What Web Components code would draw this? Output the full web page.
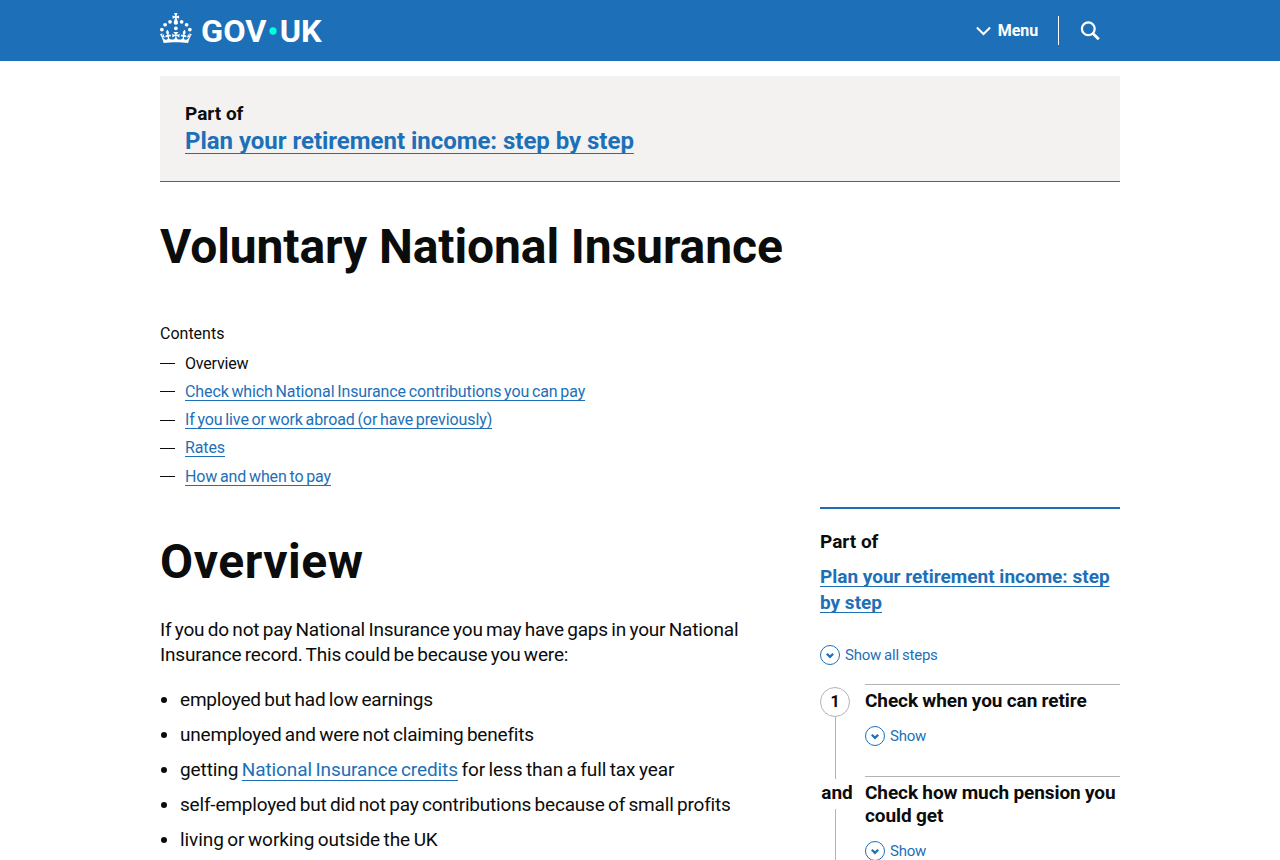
<!DOCTYPE html>
<html lang="en">
<head>
<meta charset="utf-8">
<title>Voluntary National Insurance: Overview - GOV.UK</title>
<style>
    html {
        --blue: #1d70b8;
        --grey: #b1b4b6;
        --light: #f3f2f1;
        overflow: hidden;
    }

    body {
        margin: 0;
        height: 860px;
        overflow: hidden;
        background: #fff;
        color: #0b0c0c;
        font: 19px/25px Roboto, "Liberation Sans", sans-serif;
    }
</style>
</head>
<body>

<govuk-header></govuk-header>
<govuk-page>
    <step-banner slot="banner" label="Part of">
        <govuk-link style="letter-spacing: -0.03px">Plan your retirement income: step by step</govuk-link>
    </step-banner>
    <page-heading slot="title" style="letter-spacing: -0.1px">Voluntary National Insurance</page-heading>
    <contents-list slot="contents">
        <contents-item style="letter-spacing: -0.2px">Overview</contents-item>
        <contents-item><govuk-link>Check which National Insurance contributions you can pay</govuk-link></contents-item>
        <contents-item><govuk-link>If you live or work abroad (or have previously)</govuk-link></contents-item>
        <contents-item><govuk-link>Rates</govuk-link></contents-item>
        <contents-item><govuk-link>How and when to pay</govuk-link></contents-item>
    </contents-list>
    <page-heading style="letter-spacing: 0.55px">Overview</page-heading>
    <body-text>If you do not pay National Insurance you may have gaps in your National Insurance record. This could be because you were:</body-text>
    <bullet-list>
        <bullet-item>employed but had low earnings</bullet-item>
        <bullet-item>unemployed and were not claiming benefits</bullet-item>
        <bullet-item style="letter-spacing: -0.1px">getting <govuk-link>National Insurance credits</govuk-link> for less than a full tax year</bullet-item>
        <bullet-item>self-employed but did not pay contributions because of small profits</bullet-item>
        <bullet-item style="letter-spacing: -0.08px">living or working outside the UK</bullet-item>
    </bullet-list>
    <step-nav slot="aside" label="Part of">
        <govuk-link slot="link">Plan your retirement income: step by step</govuk-link>
        <step-item marker="1">Check when you can retire</step-item>
        <step-item marker="and">Check how much pension you could get</step-item>
    </step-nav>
</govuk-page>

<script>
const define = (name, html, setup) => {
    const template = document.createElement ("template");
    template.innerHTML = html;

    customElements.define (name, class extends HTMLElement {
        constructor () {
            super ();
            this.attachShadow ({mode: "open"});
        }

        connectedCallback () {
            if (this.shadowRoot.childNodes.length) return;
            this.shadowRoot.appendChild (template.content.cloneNode (true));
            if (setup) setup (this, this.shadowRoot);
        }
    });
};

const setLabel = (host, root) => {
    root.querySelector (".label").textContent = host.getAttribute ("label");
};

define ("govuk-header", `
<style>
    :host {
        display: block;
        height: 61px;
        background: var(--blue);
        color: #fff;
    }

    .inner {
        display: flex;
        justify-content: space-between;
        width: 960px;
        margin: 0 auto;
    }

    .logo {
        display: block;
        margin-top: 13px;
        fill: #fff;
        font-size: 62px;
        font-weight: 700;
    }

    nav {
        display: flex;
        align-items: center;
        height: 61px;
        font-size: 16px;
        font-weight: 700;
    }

    .menu {
        display: flex;
        align-items: center;
        gap: 7px;
        height: 29px;
        padding-right: 20px;
        border-right: 1px solid #fff;
        letter-spacing: -0.1px;
    }

    .search {
        margin: 0 20px 0 21px;
    }

    nav svg {
        display: block;
        fill: none;
        stroke: #fff;
    }
</style>
<div class="inner">
    <svg class="logo" width="162" height="30" viewBox="0 0 324 60" overflow="visible">
        <circle cx="20" cy="17.6" r="3.7"/>
        <circle cx="10.2" cy="23.5" r="3.7"/>
        <circle cx="3.7" cy="33.2" r="3.7"/>
        <circle cx="31.7" cy="30.6" r="3.7"/>
        <circle cx="43.3" cy="17.6" r="3.7"/>
        <circle cx="53.2" cy="23.5" r="3.7"/>
        <circle cx="59.7" cy="33.2" r="3.7"/>
        <path d="M33.1,9.8c.2-.1.3-.3.5-.5l4.6,2.4v-6.8l-4.6,1.5c-.1-.2-.3-.3-.5-.5l1.9-5.9h-6.7l1.9,5.9c-.2.1-.3.3-.5.5l-4.6-1.5v6.8l4.6-2.4c.1.2.3.3.5.5l-2.6,8c-.9,2.8,1.2,5.7,4.1,5.7h0c3,0,5.1-2.9,4.1-5.7l-2.6-8ZM37,37.9s-3.4,3.8-4.1,6.1c2.2,0,4.2-.5,6.4-2.8l-.7,8.5c-2-2.8-4.4-4.1-5.7-3.8.1,3.1.5,6.7,5.8,7.2,3.7.3,6.7-1.5,7-3.8.4-2.6-2-4.3-3.7-1.6-1.4-4.5,2.4-6.1,4.9-3.2-1.9-4.5-1.8-7.7,2.4-10.9,3,4,2.6,7.3-1.2,11.1,2.4-1.3,6.2,0,4,4.6-1.2-2.8-3.7-2.2-4.2.2-.3,1.7.7,3.7,3,4.2,1.9.3,4.7-.9,7-5.9-1.3,0-2.4.7-3.9,1.7l2.4-8c.6,2.3,1.4,3.7,2.2,4.5.6-1.6.5-2.8,0-5.3l5,1.8c-2.6,3.6-5.2,8.7-7.3,17.5-7.4-1.1-15.7-1.7-24.5-1.7h0c-8.8,0-17.1.6-24.5,1.7-2.1-8.9-4.7-13.9-7.3-17.5l5-1.8c-.5,2.5-.6,3.7,0,5.3.8-.8,1.6-2.3,2.2-4.5l2.4,8c-1.5-1-2.6-1.7-3.9-1.7,2.3,5,5.2,6.2,7,5.9,2.3-.4,3.3-2.4,3-4.2-.5-2.4-3-3.1-4.2-.2-2.2-4.6,1.6-6,4-4.6-3.7-3.7-4.2-7.1-1.2-11.1,4.2,3.2,4.3,6.4,2.4,10.9,2.5-2.8,6.3-1.3,4.9,3.2-1.8-2.7-4.1-1-3.7,1.6.3,2.3,3.3,4.1,7,3.8,5.4-.5,5.7-4.2,5.8-7.2-1.3-.2-3.7,1-5.7,3.8l-.7-8.5c2.2,2.3,4.2,2.7,6.4,2.8-.7-2.3-4.1-6.1-4.1-6.1h10.6Z"/>
        <text x="82" y="58" textLength="131" lengthAdjust="spacingAndGlyphs">GOV</text>
        <circle cx="226" cy="36" r="7.3" fill="#00ffe0"/>
        <text x="239.500" y="58" textLength="84" lengthAdjust="spacingAndGlyphs">UK</text>
    </svg>
    <nav>
        <div class="menu">
            <svg width="15" height="10" viewBox="0 0 15 10" stroke-width="2"><path d="M0.900 1.500L7.500 8L14.100 1.500"/></svg>
            <span>Menu</span>
        </div>
        <svg class="search" width="20" height="20" viewBox="0 0 20 20">
            <circle cx="8.300" cy="7.700" r="6.400" stroke-width="2.200"/>
            <path d="M12.700 12.200L18.800 18.300" stroke-width="2.800"/>
        </svg>
    </nav>
</div>
`);

define ("govuk-page", `
<style>
    :host {
        display: block;
        width: 960px;
        margin: 15px auto 0;
    }

    .title {
        margin-top: 40px;
    }

    .contents {
        margin-top: 50px;
    }

    .columns {
        display: grid;
        grid-template-columns: 600px 300px;
        column-gap: 60px;
        margin-top: 18px;
    }

    .text {
        padding-top: 30px;
    }
</style>
<slot name="banner"></slot>
<div class="title"><slot name="title"></slot></div>
<div class="contents"><slot name="contents"></slot></div>
<div class="columns">
    <div class="text"><slot></slot></div>
    <slot name="aside"></slot>
</div>
`);

define ("govuk-link", `
<style>
    :host {
        display: inline;
        color: var(--blue);
    }

    span {
        text-decoration: underline;
        text-decoration-thickness: 1px;
        text-decoration-skip-ink: none;
        text-underline-offset: var(--underline-offset, 0.19em);
    }
</style>
<span><slot></slot></span>
`);

define ("step-banner", `
<style>
    :host {
        --underline-offset: 0.15em;
        display: block;
        padding: 25px;
        border-bottom: 1px solid var(--blue);
        background: var(--light);
        font-weight: 700;
    }

    .link {
        font-size: 24px;
        line-height: 30px;
    }
</style>
<div class="label"></div>
<div class="link"><slot></slot></div>
`, setLabel);

define ("page-heading", `
<style>
    :host {
        display: block;
    }

    h1 {
        margin: 0;
        font-size: 48px;
        font-weight: 700;
        line-height: 50px;
    }
</style>
<h1><slot></slot></h1>
`);

define ("contents-list", `
<style>
    :host {
        display: block;
        font-size: 16px;
        line-height: 24px;
    }

    .items {
        display: grid;
        row-gap: 4.250px;
        margin-top: 5.500px;
    }
</style>
<div>Contents</div>
<div class="items"><slot></slot></div>
`);

define ("contents-item", `
<style>
    :host {
        display: flex;
        align-items: center;
        gap: 10px;
        letter-spacing: -0.11px;
        word-spacing: -1.100px;
    }

    i {
        width: 15px;
        height: 1px;
        background: currentColor;
    }
</style>
<i></i>
<div><slot></slot></div>
`);

define ("body-text", `
<style>
    :host {
        display: block;
        margin-top: 30px;
        letter-spacing: -0.17px;
        word-spacing: -1.200px;
    }
</style>
<slot></slot>
`);

define ("bullet-list", `
<style>
    :host {
        display: grid;
        row-gap: 10px;
        margin-top: 20px;
        letter-spacing: -0.19px;
        word-spacing: -1.100px;
    }
</style>
<slot></slot>
`);

define ("bullet-item", `
<style>
    :host {
        display: flex;
        align-items: center;
        gap: 13px;
    }

    i {
        width: 6px;
        height: 6px;
        margin: 1px 0 0 1px;
        border-radius: 50%;
        background: currentColor;
    }
</style>
<i></i>
<div><slot></slot></div>
`);

// round chevron followed by its label
define ("show-toggle", `
<style>
    :host {
        display: flex;
        align-items: center;
        gap: 5px;
        height: 20px;
        color: var(--blue);
        font-size: 15px;
        font-weight: 400;
        line-height: 20px;
        word-spacing: -0.6px;
        letter-spacing: -0.2px;
    }

    svg {
        fill: none;
        stroke: currentColor;
    }
</style>
<svg width="20" height="20" viewBox="0 0 20 20">
    <circle cx="10" cy="10" r="9.500"/>
    <path d="M6.800 8.700L10 11.900L13.200 8.700" stroke-width="2.200"/>
</svg>
<span><slot></slot></span>
`);

define ("step-nav", `
<style>
    :host {
        display: block;
        border-top: 2px solid var(--blue);
        font-weight: 700;
    }

    .label {
        margin-top: 20px;
    }

    .link {
        margin: 10px 0 29px;
        line-height: 26px;
        --underline-offset: 0.15em;
    }

    .steps {
        margin-top: 19px;
    }
</style>
<div class="label"></div>
<div class="link"><slot name="link"></slot></div>
<show-toggle>Show all steps</show-toggle>
<div class="steps"><slot></slot></div>
`, setLabel);

define ("step-item", `
<style>
    :host {
        display: grid;
        grid-template-columns: 30px 255px;
        column-gap: 15px;
    }

    .rail {
        display: flex;
        flex-direction: column;
        align-items: center;
        padding-top: 3px;
    }

    .marker {
        display: flex;
        flex: none;
        align-items: center;
        justify-content: center;
        box-sizing: border-box;
        height: 30px;
        padding: 0 0 2px 4px;
    }

    .number {
        width: 30px;
        padding: 0;
        border: 1px solid var(--grey);
        border-radius: 50%;
        font-size: 16px;
    }

    .line {
        flex: 1;
        width: 1px;
        margin-bottom: -3px;
        background: var(--grey);
    }

    .content {
        padding: 4px 0 30px;
        border-top: 1px solid var(--grey);
        line-height: 23px;
        letter-spacing: -0.08px;
        word-spacing: -0.3px;
    }

    show-toggle {
        margin-top: 14px;
    }
</style>
<div class="rail"><div class="marker"></div><div class="line"></div></div>
<div class="content">
    <slot></slot>
    <show-toggle>Show</show-toggle>
</div>
`, (host, root) => {
    const marker = root.querySelector (".marker");
    marker.textContent = host.getAttribute ("marker");
    marker.classList.toggle ("number", !isNaN (host.getAttribute ("marker")));
});
</script>
</body>
</html>
